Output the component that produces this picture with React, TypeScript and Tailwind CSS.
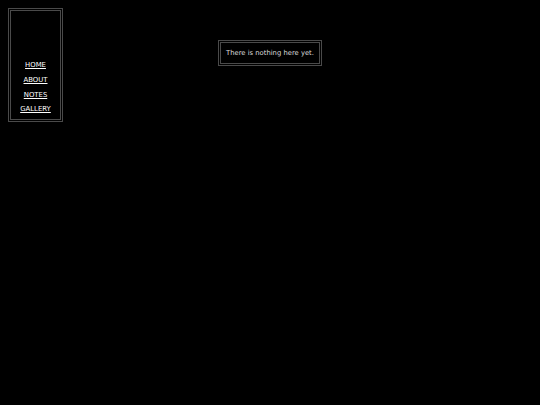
export default function App() {
  const links = ["HOME", "ABOUT", "NOTES", "GALLERY"];
  return (
    <div className="relative min-h-[405px] w-full bg-black font-['DejaVu_Sans',sans-serif] text-white">
      <nav className="absolute left-[8px] top-[8px] flex h-[114px] w-[55px] flex-col items-center justify-end border-[3px] border-double border-[#4a4a4a] pb-[2px]">
        {links.map((l) => (
          <a key={l} href="#" className="block text-[6.9px] leading-[14.7px] text-white underline">
            {l}
          </a>
        ))}
      </nav>
      <div className="flex justify-center pt-[40px]">
        <div className="border-[3px] border-double border-[#4a4a4a] px-[5px] pb-[5px] pt-[6px] text-[6.8px] leading-[9px] text-[#ddd]">
          There is nothing here yet.
        </div>
      </div>
    </div>
  );
}
